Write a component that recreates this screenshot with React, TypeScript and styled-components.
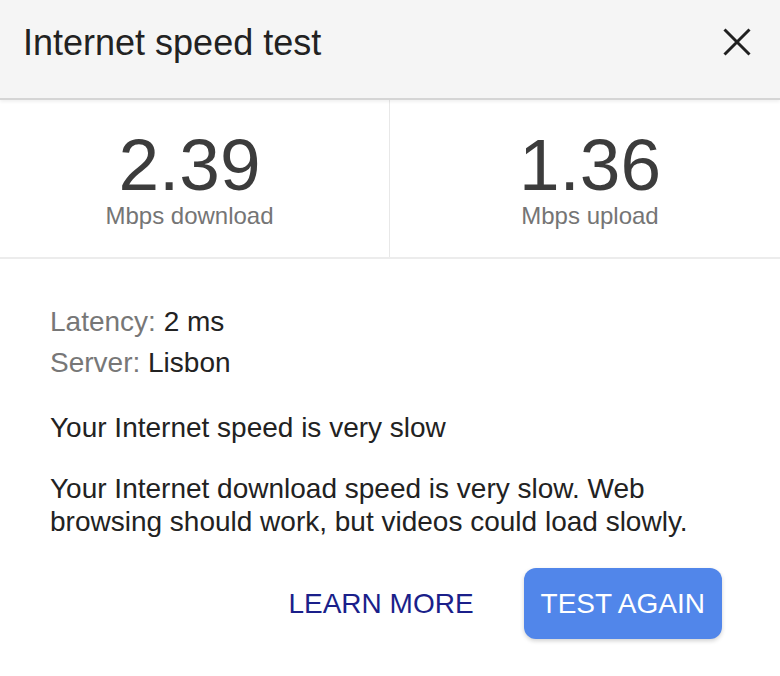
import React from "react";
import styled, { createGlobalStyle } from "styled-components";

const GlobalStyle = createGlobalStyle`
  html, body {
    margin: 0;
    padding: 0;
    background: #ffffff;
  }
  body {
    font-family: "Liberation Sans", Arial, Helvetica, sans-serif;
    -webkit-font-smoothing: antialiased;
  }
`;

const Card = styled.div`
  width: 780px;
  height: 676px;
  background: #ffffff;
  display: flex;
  flex-direction: column;
`;

const Header = styled.header`
  height: 100px;
  background: #f5f5f5;
  border-bottom: 2px solid #d5d5d5;
  box-shadow: 0 2px 3px rgba(0, 0, 0, 0.06);
  display: flex;
  align-items: center;
  justify-content: space-between;
  padding: 0 29px 0 23px;
  box-sizing: border-box;
  position: relative;
  z-index: 1;
`;

const Title = styled.h1`
  margin: 0;
  font-size: 36px;
  font-weight: 400;
  color: #222222;
  line-height: 1;
  margin-top: -12px;
`;

const CloseButton = styled.button`
  border: none;
  background: transparent;
  padding: 0;
  width: 28px;
  height: 28px;
  margin-top: -14px;
  display: flex;
  align-items: center;
  justify-content: center;
  cursor: pointer;
`;

const Stats = styled.section`
  display: grid;
  grid-template-columns: 390px 1fr;
  border-bottom: 2px solid #ececec;
`;

const Stat = styled.div<{ $side: "left" | "right" }>`
  display: flex;
  flex-direction: column;
  align-items: center;
  padding: 29px 0 27px;
  padding-left: ${(p) => (p.$side === "right" ? "10px" : "0")};
  padding-right: ${(p) => (p.$side === "left" ? "10px" : "0")};
  border-right: ${(p) => (p.$side === "left" ? "1px solid #e8e8e8" : "none")};
`;

const Value = styled.div`
  font-size: 73px;
  line-height: 72px;
  color: #3c3c3c;
`;

const Unit = styled.div`
  font-size: 24px;
  line-height: 28px;
  color: #757575;
  margin-top: 1px;
`;

const Body = styled.section`
  padding: 42px 50px 0;
  display: flex;
  flex-direction: column;
`;

const InfoRow = styled.div`
  font-size: 28px;
  line-height: 41px;
  color: #222222;
`;

const InfoLabel = styled.span`
  color: #777777;
`;

const Verdict = styled.p`
  margin: 28px 0 0;
  font-size: 28px;
  line-height: 33px;
  color: #222222;
`;

const Description = styled.p`
  margin: 28px 0 0;
  font-size: 28px;
  line-height: 33px;
  color: #222222;
`;

const Actions = styled.div`
  display: flex;
  justify-content: flex-end;
  align-items: center;
  gap: 50px;
  margin-top: 30px;
  padding-right: 8px;
`;

const TextButton = styled.button`
  border: none;
  background: transparent;
  padding: 0;
  font-family: inherit;
  font-size: 28px;
  color: #1a1f8a;
  cursor: pointer;
`;

const PrimaryButton = styled.button`
  border: none;
  background: #5186ea;
  color: #ffffff;
  font-family: inherit;
  font-size: 28px;
  height: 71px;
  padding: 0 17px;
  border-radius: 12px;
  box-shadow: 0 2px 4px rgba(0, 0, 0, 0.18);
  cursor: pointer;
`;

export default function App() {
  return (
    <>
      <GlobalStyle />
      <Card>
        <Header>
          <Title>Internet speed test</Title>
          <CloseButton aria-label="Close">
            <svg width="28" height="28" viewBox="0 0 28 28">
              <path d="M1.5 1.5 L26.5 26.5 M26.5 1.5 L1.5 26.5" stroke="#202020" strokeWidth="3" strokeLinecap="butt" />
            </svg>
          </CloseButton>
        </Header>
        <Stats>
          <Stat $side="left">
            <Value>2.39</Value>
            <Unit>Mbps download</Unit>
          </Stat>
          <Stat $side="right">
            <Value>1.36</Value>
            <Unit>Mbps upload</Unit>
          </Stat>
        </Stats>
        <Body>
          <InfoRow>
            <InfoLabel>Latency:</InfoLabel> 2 ms
          </InfoRow>
          <InfoRow>
            <InfoLabel>Server:</InfoLabel> Lisbon
          </InfoRow>
          <Verdict>Your Internet speed is very slow</Verdict>
          <Description>
            Your Internet download speed is very slow. Web browsing should work, but videos could load slowly.
          </Description>
          <Actions>
            <TextButton>LEARN MORE</TextButton>
            <PrimaryButton>TEST AGAIN</PrimaryButton>
          </Actions>
        </Body>
      </Card>
    </>
  );
}
